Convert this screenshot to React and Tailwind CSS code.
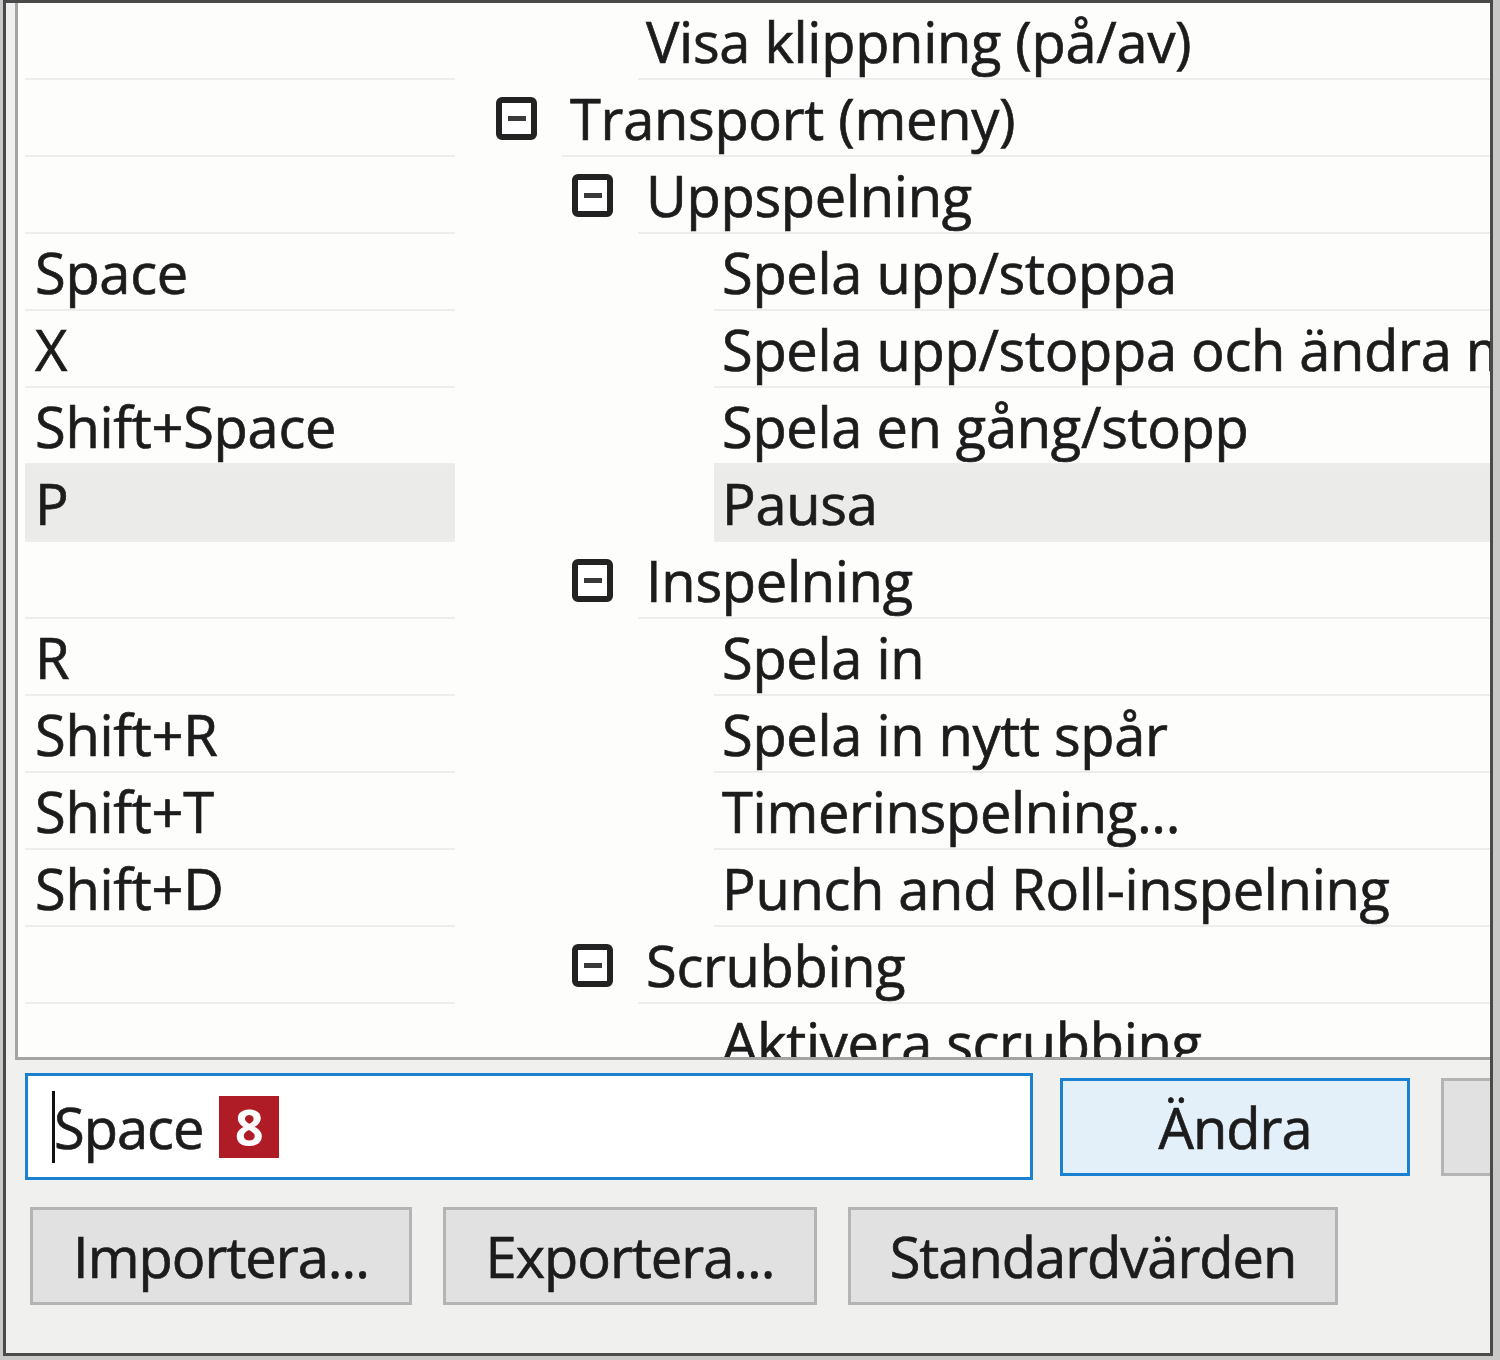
import React from "react";

const rows = [
  { key: "", level: 1, text: "Visa klippning (på/av)" },
  { key: "", level: 0, node: true, text: "Transport (meny)" },
  { key: "", level: 1, node: true, text: "Uppspelning" },
  { key: "Space", level: 2, text: "Spela upp/stoppa" },
  { key: "X", level: 2, text: "Spela upp/stoppa och ändra markör" },
  { key: "Shift+Space", level: 2, text: "Spela en gång/stopp" },
  { key: "P", level: 2, text: "Pausa", selected: true },
  { key: "", level: 1, node: true, text: "Inspelning" },
  { key: "R", level: 2, text: "Spela in" },
  { key: "Shift+R", level: 2, text: "Spela in nytt spår" },
  { key: "Shift+T", level: 2, text: "Timerinspelning..." },
  { key: "Shift+D", level: 2, text: "Punch and Roll-inspelning" },
  { key: "", level: 1, node: true, text: "Scrubbing" },
  { key: "", level: 2, text: "Aktivera scrubbing" },
];

const indent = {
  0: "w-[102px]",
  1: "w-[178px]",
  2: "w-[254px]",
};

function MinusBox() {
  return (
    <div className="w-[41px] h-[43px] border-[6px] border-[#222] rounded-[6px] bg-white flex items-center justify-center">
      <div className="w-[18px] h-[5px] bg-[#3a3a3a]" />
    </div>
  );
}

function Row({ r }) {
  return (
    <div className="flex h-[77px] shrink-0">
      <div className="w-[442px] shrink-0 h-full">
        <div
          className={
            "ml-[7px] w-[430px] h-full border-b-2 border-[#ededed] flex items-center pl-[10px] " +
            (r.selected ? "bg-[#ebebea]" : "")
          }
        >
          {r.key}
        </div>
      </div>
      <div className="flex-1 flex h-full min-w-0">
        <div className={indent[r.level] + " shrink-0 h-full flex items-center justify-end pr-[25px]"}>
          {r.node ? <MinusBox /> : null}
        </div>
        <div
          className={
            "flex-1 h-full border-b-2 border-[#ededed] flex items-center pl-[8px] whitespace-nowrap overflow-hidden " +
            (r.selected ? "bg-[#ebebea]" : "")
          }
        >
          {r.text}
        </div>
      </div>
    </div>
  );
}

function Btn({ w, children, active }) {
  return (
    <div
      className={
        w +
        " h-[98px] shrink-0 flex items-center justify-center border-[3px] tracking-[-1px] " +
        (active ? "border-[#1a80d0] bg-[#e3f0fa]" : "border-[#b4b4b4] bg-[#e1e1e1]")
      }
    >
      {children}
    </div>
  );
}

export default function App() {
  return (
    <div
      className="w-[1500px] h-[1360px] bg-[#c9c9c7] overflow-hidden text-[#1c1c1c] text-[56px] [-webkit-text-stroke:0.7px]"
      style={{ fontFamily: '"Open Sans", "Noto Sans", sans-serif' }}
    >
      <div className="ml-[3px] w-[1490px] h-[1356px] border-[3px] border-[#4a4a4a] bg-[#f0f0ee] overflow-hidden flex flex-col">
        <div className="ml-[9px] h-[1057px] shrink-0 border-l-[3px] border-b-[3px] border-[#a4a4a4] bg-[#fdfdfc] overflow-hidden flex flex-col tracking-[-0.3px]">
          {rows.map((r, i) => (
            <Row key={i} r={r} />
          ))}
        </div>

        <div className="mt-[13px] ml-[19px] flex items-center gap-[27px] shrink-0">
          <div className="w-[1008px] h-[107px] shrink-0 border-[3px] border-[#1a80d0] bg-white flex items-center pl-[24px] tracking-[-1px]">
            <div className="w-[3px] h-[72px] bg-[#111]" />
            <span className="ml-[-1px]">Space</span>
            <div className="ml-[16px] w-[60px] h-[62px] bg-[#b01c26] text-white font-bold text-[50px] tracking-normal flex items-center justify-center leading-none [-webkit-text-stroke:0px]">
              8
            </div>
          </div>
          <Btn w="w-[350px]" active>
            Ändra
          </Btn>
          <div className="ml-[4px]">
            <Btn w="w-[350px]"> </Btn>
          </div>
        </div>

        <div className="mt-[27px] ml-[24px] flex gap-[31px] shrink-0">
          <Btn w="w-[382px]">Importera...</Btn>
          <Btn w="w-[374px]">Exportera...</Btn>
          <Btn w="w-[490px]">Standardvärden</Btn>
        </div>
      </div>
    </div>
  );
}
